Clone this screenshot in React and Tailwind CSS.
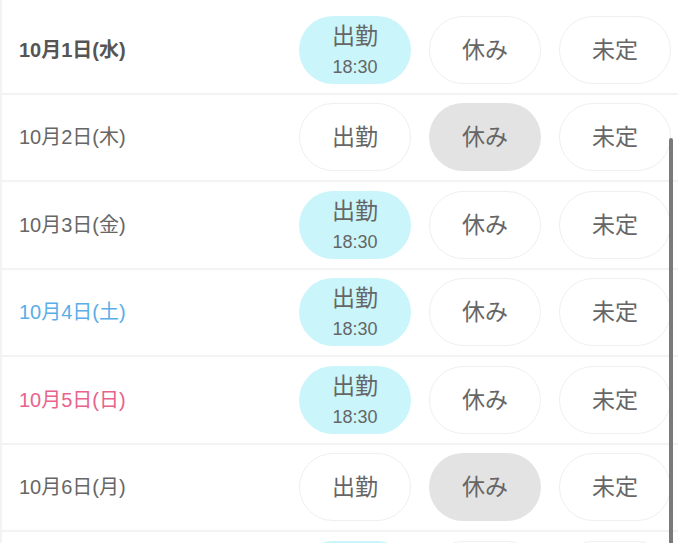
import React from 'react';

// ─── Data ─────────────────────────────────────────────────────────────────────

const DAYS = [
  { label: '10月1日(水)', status: 'work', time: '18:30', tone: 'today' },
  { label: '10月2日(木)', status: 'off' },
  { label: '10月3日(金)', status: 'work', time: '18:30' },
  { label: '10月4日(土)', status: 'work', time: '18:30', tone: 'sat' },
  { label: '10月5日(日)', status: 'work', time: '18:30', tone: 'sun' },
  { label: '10月6日(月)', status: 'off' },
  { label: '10月7日(火)', status: 'work', time: '18:30' },
];

const labelTone = {
  today: 'text-[#555] font-bold',
  sat: 'text-[#5aaee8]',
  sun: 'text-[#e8628c]',
};

// ─── Pill button ──────────────────────────────────────────────────────────────

const Pill = ({ active, activeBg, children }) => (
  <button
    className={`shrink-0 w-[112px] h-[68px] rounded-full flex flex-col items-center justify-center text-[#666] ${
      active ? activeBg : 'bg-white border border-[#efefef]'
    }`}
  >
    {children}
  </button>
);

// ─── Row ──────────────────────────────────────────────────────────────────────

const DayRow = ({ day }) => (
  <div className="h-[87.5px] flex items-center border-b-2 border-[#f3f3f3] pr-[7px]">
    <div className={`flex-1 pl-[17px] text-[20px] ${labelTone[day.tone] || 'text-[#666]'}`}>
      {day.label}
    </div>
    <div className="flex gap-[18px]">
      <Pill active={day.status === 'work'} activeBg="bg-[#c9f5fb]">
        <span className="text-[23px] leading-[28px]">出勤</span>
        {day.status === 'work' && (
          <span className="text-[18px] leading-[22px] mt-[6px]">{day.time}</span>
        )}
      </Pill>
      <Pill active={day.status === 'off'} activeBg="bg-[#e3e3e3]">
        <span className="text-[23px]">休み</span>
      </Pill>
      <Pill active={day.status === 'tbd'} activeBg="bg-[#e3e3e3]">
        <span className="text-[23px]">未定</span>
      </Pill>
    </div>
  </div>
);

// ─── Main ─────────────────────────────────────────────────────────────────────

export default function App() {
  return (
    <div
      className="relative w-[680px] h-[543px] overflow-hidden bg-white border-l-2 border-[#f3f3f3]"
      style={{ fontFamily: '"Liberation Sans", "Noto Sans CJK JP", sans-serif' }}
    >
      <div className="pt-[7px] pr-[2px]">
        {DAYS.map(d => <DayRow key={d.label} day={d} />)}
      </div>

      {/* scroll indicator */}
      <div className="absolute right-[7px] top-[138px] bottom-0 w-[4px] rounded-t-full bg-[#7a7a7a]" />
    </div>
  );
}
